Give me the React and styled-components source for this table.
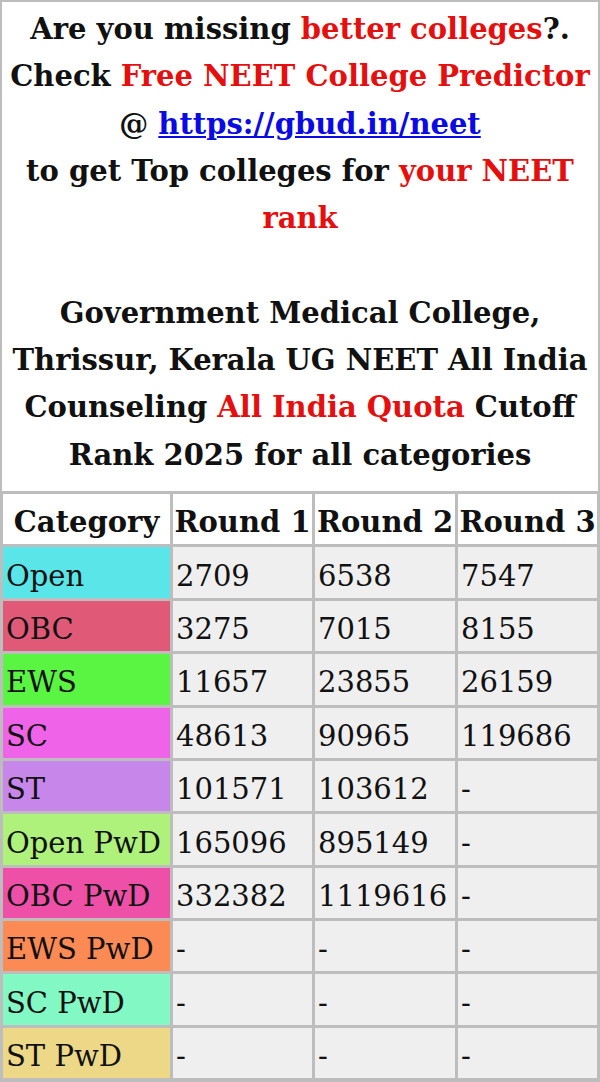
import React from "react";
import styled, { createGlobalStyle } from "styled-components";

const Global = createGlobalStyle`
  html, body { margin: 0; padding: 0; background: #bdbdbd; }
  body { font-family: "DejaVu Serif", "Liberation Serif", serif; color: #111; }
`;

const Frame = styled.div`
  width: 600px;
  box-sizing: border-box;
  padding: 2px 2px 0;
  background: #bdbdbd;
`;

const Intro = styled.div`
  background: #fff;
  text-align: center;
  font-weight: bold;
  font-size: 29px;
  line-height: 47.3px;
  padding: 4px 4px 12px;
  white-space: nowrap;
`;

const Red = styled.span`
  color: #e60f0f;
`;

const Link = styled.a`
  color: #0a0ae6;
  text-decoration: underline;
`;

const Grid = styled.div`
  display: grid;
  grid-template-columns: 167px 139px 140px 139px;
  grid-auto-rows: 50.4px;
  gap: 3px;
  padding: 3px 1px 1px;
  background: #bdbdbd;
`;

const Head = styled.div`
  background: #fff;
  font-weight: bold;
  font-size: 29px;
  display: flex;
  align-items: center;
  justify-content: center;
  padding-top: 6px;
  box-sizing: border-box;
  white-space: nowrap;
`;

const Cell = styled.div`
  background: ${(p) => p.$bg || "#efefef"};
  font-size: 29px;
  display: flex;
  align-items: center;
  padding: 6px 0 0 3px;
  box-sizing: border-box;
  white-space: nowrap;
  color: #111;
`;

const rows = [
  ["Open", "#5ae6e8", "2709", "6538", "7547"],
  ["OBC", "#e05a78", "3275", "7015", "8155"],
  ["EWS", "#5af543", "11657", "23855", "26159"],
  ["SC", "#ef63e8", "48613", "90965", "119686"],
  ["ST", "#c787ea", "101571", "103612", "-"],
  ["Open PwD", "#aef27c", "165096", "895149", "-"],
  ["OBC PwD", "#ee50a8", "332382", "1119616", "-"],
  ["EWS PwD", "#fb8a55", "-", "-", "-"],
  ["SC PwD", "#82f8c4", "-", "-", "-"],
  ["ST PwD", "#ecd887", "-", "-", "-"],
];

export default function App() {
  return (
    <>
      <Global />
      <Frame>
        <Intro>
          Are you missing <Red>better colleges</Red>?.<br />
          Check <Red>Free NEET College Predictor</Red>
          <br />@ <Link href="#">https://gbud.in/neet</Link>
          <br />
          to get Top colleges for <Red>your NEET</Red>
          <br />
          <Red>rank</Red>
          <br />
          <br />
          Government Medical College,
          <br />
          Thrissur, Kerala UG NEET All India
          <br />
          Counseling <Red>All India Quota</Red> Cutoff
          <br />
          Rank 2025 for all categories
        </Intro>
        <Grid>
          <Head>Category</Head>
          <Head>Round 1</Head>
          <Head>Round 2</Head>
          <Head>Round 3</Head>
          {rows.map(([cat, bg, r1, r2, r3]) => (
            <React.Fragment key={cat}>
              <Cell $bg={bg}>{cat}</Cell>
              <Cell>{r1}</Cell>
              <Cell>{r2}</Cell>
              <Cell>{r3}</Cell>
            </React.Fragment>
          ))}
        </Grid>
      </Frame>
    </>
  );
}
